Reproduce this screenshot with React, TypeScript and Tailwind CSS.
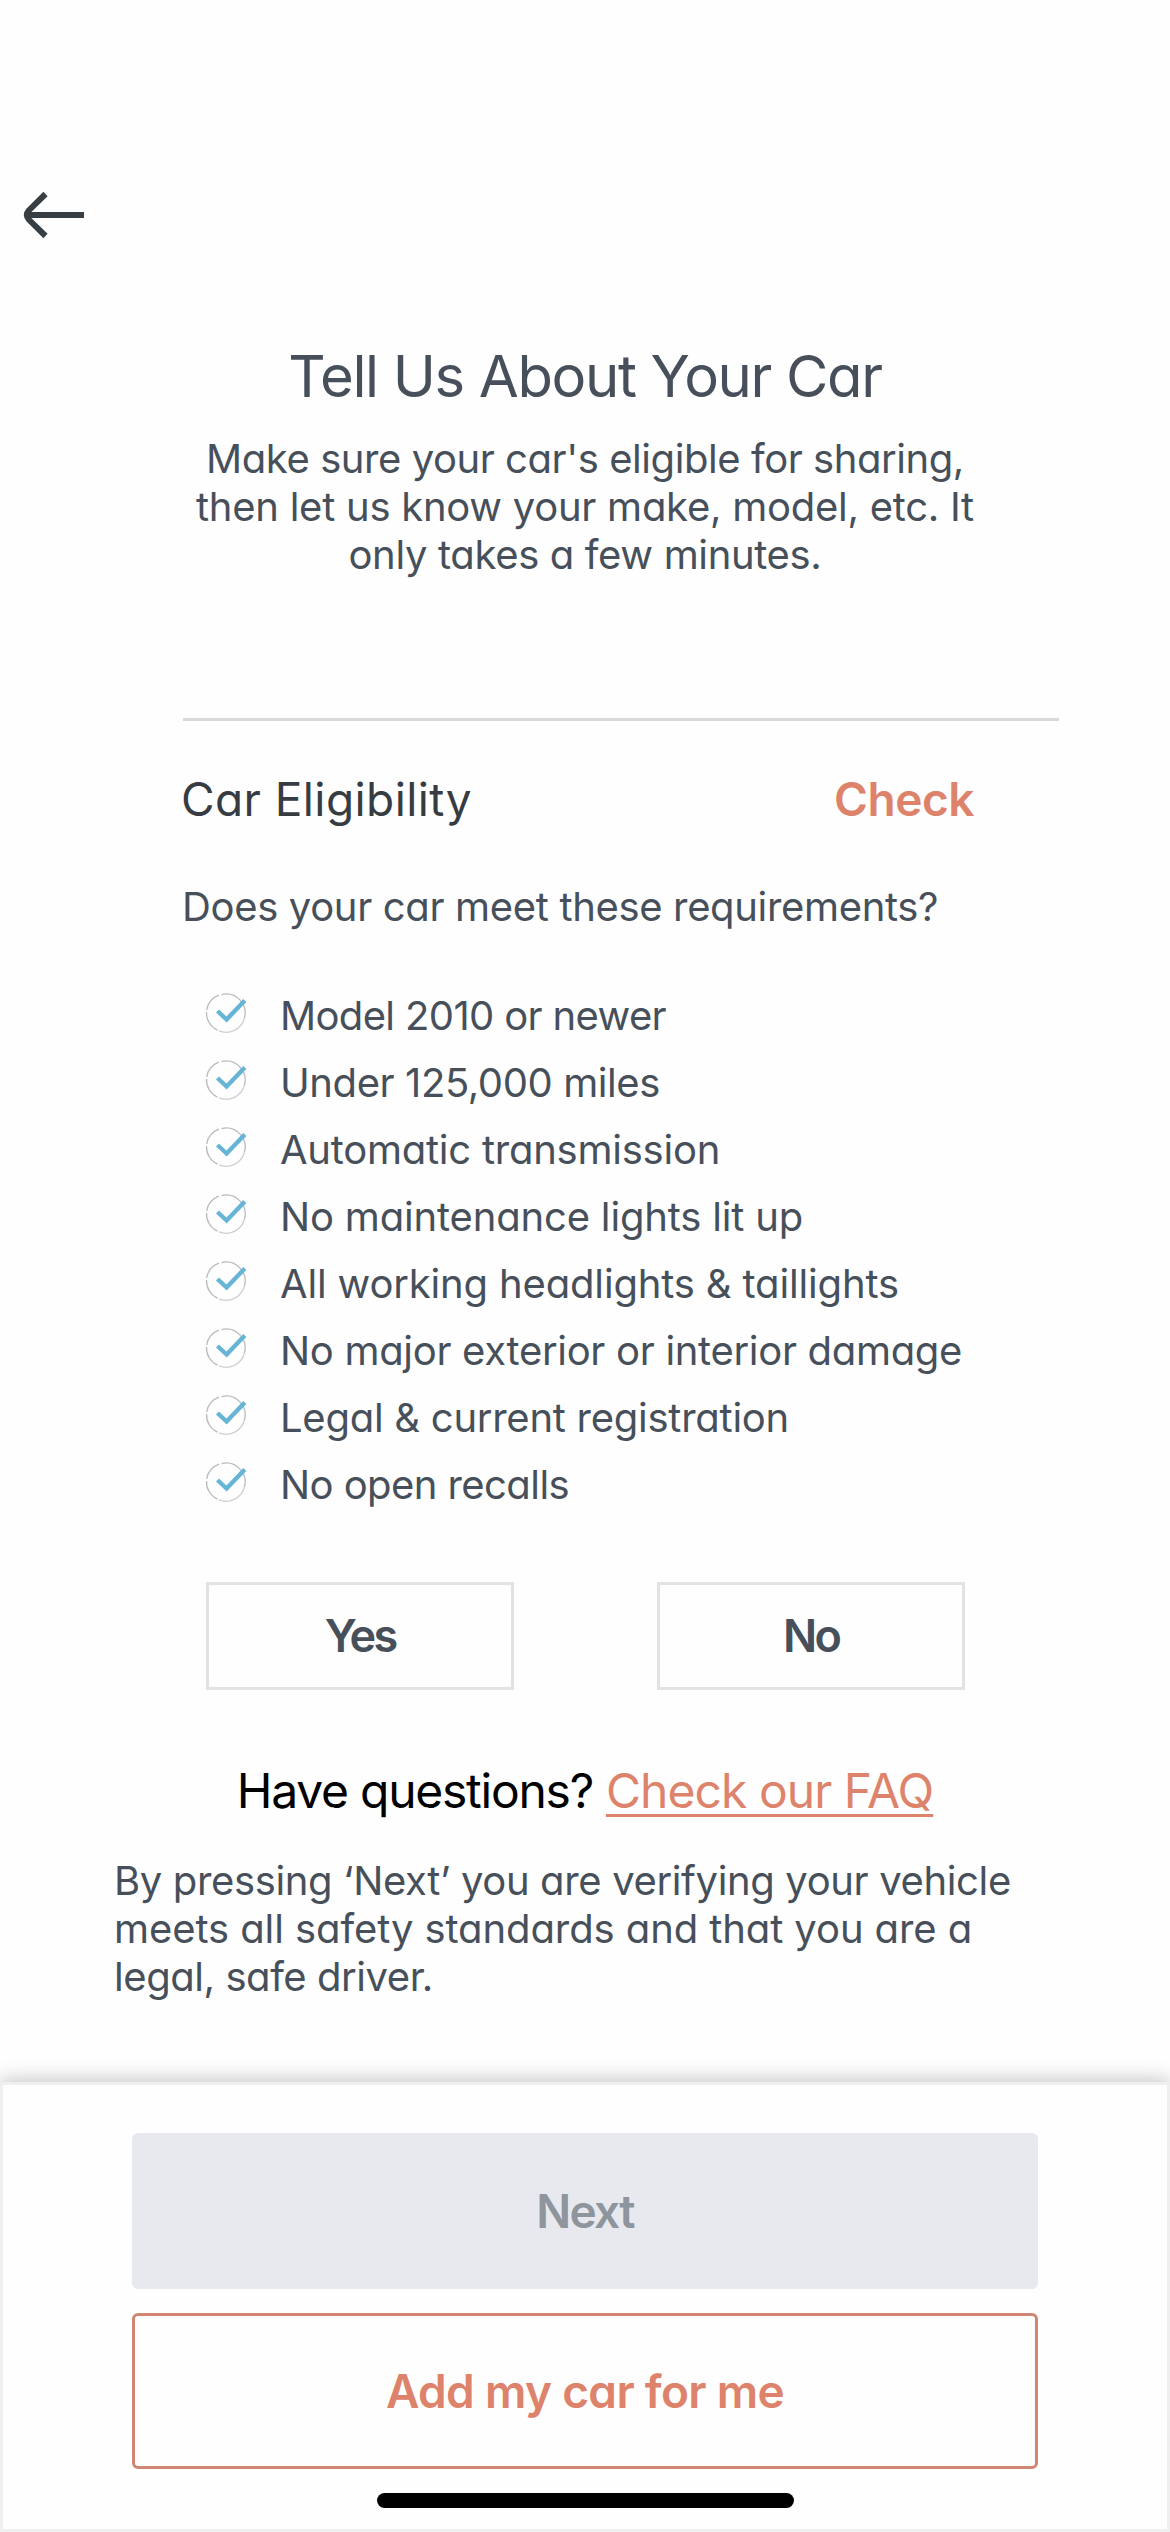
import React, { useState } from 'react';
import { clsx } from 'clsx';

interface Requirement {
  label: string;
  tracking: string;
}

const requirements: Requirement[] = [
  { label: 'Model 2010 or newer', tracking: 'tracking-[-0.64px]' },
  { label: 'Under 125,000 miles', tracking: 'tracking-[-0.41px]' },
  { label: 'Automatic transmission', tracking: 'tracking-[-0.24px]' },
  { label: 'No maintenance lights lit up', tracking: 'tracking-[-0.17px]' },
  { label: 'All working headlights & taillights', tracking: 'tracking-[-0.16px]' },
  { label: 'No major exterior or interior damage', tracking: 'tracking-[-0.31px]' },
  { label: 'Legal & current registration', tracking: 'tracking-[-0.26px]' },
  { label: 'No open recalls', tracking: 'tracking-[-0.57px]' },
];

function BackArrow() {
  return (
    <svg width="62" height="48" viewBox="0 0 62 48" fill="none" stroke="#373f45" strokeWidth="6">
      <path d="M61 24H6" />
      <path d="M22.5 3 L6 19.2 Q1.8 24 6 28.8 L22.5 45" />
    </svg>
  );
}

function CheckIcon() {
  return (
    <svg width="42" height="42" viewBox="0 0 42 42" fill="none">
      <path d="M16.5 2.6 A19 19 0 0 1 39.3 26.5" stroke="#b9bbbf" strokeWidth="1.3" />
      <path d="M39.3 26.5 A19 19 0 0 1 14 38.9" stroke="#cfd0d3" strokeWidth="1.3" />
      <path d="M12.5 38.2 A19 19 0 0 1 1.5 20" stroke="#b9bbbf" strokeWidth="1.3" />
      <path d="M1.7 18 A19 19 0 0 1 14 3.2" stroke="#b9bbbf" strokeWidth="1.3" />
      <path d="M12.5 19 L21.6 27.5 L39.8 8.4" stroke="#67b5d6" strokeWidth="4.4" />
    </svg>
  );
}

function AnswerButton({ label, selected, onClick }: { label: string; selected: boolean; onClick: () => void }) {
  return (
    <button
      onClick={onClick}
      className={clsx(
        'w-[308px] h-[108px] border-3 text-[45px] font-semibold tracking-[-2.8px] text-[#47505a]',
        selected ? 'border-[#de836b]' : 'border-[#e2e2e2]'
      )}
    >
      {label}
    </button>
  );
}

export default function App() {
  const [answer, setAnswer] = useState<'yes' | 'no' | null>(null);

  return (
    <div className="flex flex-col w-[1170px] h-[2532px] bg-[#fefefe] text-[#47505a] font-['Inter','Liberation_Sans',sans-serif] [font-feature-settings:'cv11'] whitespace-nowrap overflow-hidden">
      <header className="h-[341px] pt-[191px] pl-[23px]">
        <button aria-label="Back" className="block">
          <BackArrow />
        </button>
      </header>

      <section className="text-center">
        <h1 className="text-[58px] leading-[70px] tracking-[-1.35px]">Tell Us About Your Car</h1>
        <p className="mt-[24px] text-[40px] leading-[48px]">
          <span className="block tracking-[-0.44px]">Make sure your car's eligible for sharing,</span>
          <span className="block tracking-[-0.26px]">then let us know your make, model, etc. It</span>
          <span className="block tracking-[-0.35px]">only takes a few minutes.</span>
        </p>
      </section>

      {/* Eligibility */}
      <section className="mt-[139px] ml-[183px] mr-[111px] border-t-3 border-[#d8d8d8]">
        <div className="flex justify-between mt-[50px] -ml-[2px] pr-[85px] text-[46px] leading-[56px]">
          <h2 className="text-[#373c42] tracking-[0.42px]">Car Eligibility</h2>
          <button className="font-semibold text-[#de836b] tracking-[-0.45px]">Check</button>
        </div>
        <p className="mt-[56px] -ml-px text-[40px] leading-[48px] tracking-[-0.34px]">
          Does your car meet these requirements?
        </p>
        <ul className="mt-[51px] ml-[22px] text-[40px]">
          {requirements.map(({ label, tracking }) => (
            <li key={label} className="flex items-center gap-[33px] h-[67px]">
              <span className="mb-[6px]">
                <CheckIcon />
              </span>
              <span className={tracking}>{label}</span>
            </li>
          ))}
        </ul>
      </section>

      <div className="flex justify-between mt-[64px] ml-[206px] mr-[205px]">
        <AnswerButton label="Yes" selected={answer === 'yes'} onClick={() => setAnswer('yes')} />
        <AnswerButton label="No" selected={answer === 'no'} onClick={() => setAnswer('no')} />
      </div>

      <p className="flex justify-center gap-[13px] mt-[72px] text-[48px] leading-[58px] [font-feature-settings:normal]">
        <span className="text-black tracking-[-1.25px]">Have questions?</span>
        <a className="text-[#de836b] tracking-[-0.95px] underline decoration-3 underline-offset-[6px] [text-decoration-skip-ink:none]">
          Check our FAQ
        </a>
      </p>

      <p className="mt-[37px] ml-[114px] text-[40px] leading-[48px]">
        <span className="block tracking-[-0.36px]">By pressing ‘Next’ you are verifying your vehicle</span>
        <span className="block tracking-[-0.09px]">meets all safety standards and that you are a</span>
        <span className="block tracking-[-0.44px]">legal, safe driver.</span>
      </p>

      {/* Bottom actions */}
      <footer className="flex flex-col items-center mt-auto h-[450px] shrink-0 pt-[48px] bg-[#fefefe] border-3 border-[#efefef] shadow-[0_-3px_18px_rgba(0,0,0,0.22)] text-[46px] font-semibold">
        <button className="w-[906px] h-[156px] rounded-[6px] bg-[#e8e9ee] text-[#8e959d] tracking-[-1.7px]">
          Next
        </button>
        <button className="w-[906px] h-[156px] mt-[24px] rounded-[6px] border-3 border-[#d08672] text-[#de836b] tracking-[-0.69px]">
          Add my car for me
        </button>
        <div className="w-[417px] h-[15px] mt-[24px] rounded-full bg-black" />
      </footer>
    </div>
  );
}
